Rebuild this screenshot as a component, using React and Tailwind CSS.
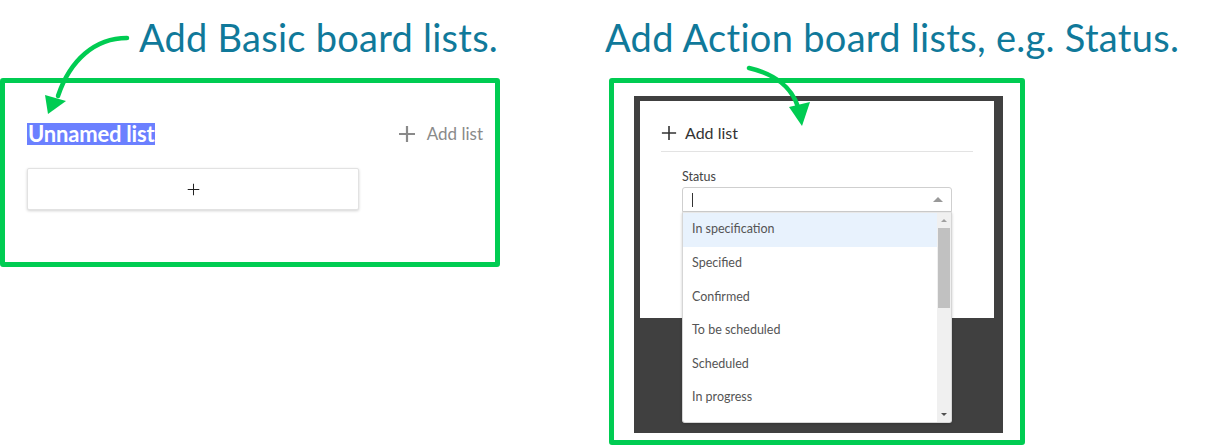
const STATUSES = ['In specification', 'Specified', 'Confirmed', 'To be scheduled', 'Scheduled', 'In progress']

// ── Annotation arrows ────────────────────────────────────────────────────────
function LeftArrow() {
  return (
    <svg className="absolute left-0 top-0" width="140" height="120" viewBox="0 0 140 120">
      <path d="M127 38 C 95 38, 70 60, 58 96" fill="none" stroke="#00cc52" strokeWidth="4.5" strokeLinecap="round" />
      <polygon points="45,95 66,101 48,114" fill="#00cc52" />
    </svg>
  )
}

function RightArrow() {
  return (
    <svg className="absolute left-[740px] top-[60px]" width="80" height="75" viewBox="740 60 80 75">
      <path d="M749 68 C 775 74, 792 88, 798 107" fill="none" stroke="#00cc52" strokeWidth="4.5" strokeLinecap="round" />
      <polygon points="789,107 810,102 802,126" fill="#00cc52" />
    </svg>
  )
}

function Plus({ size = 18, stroke = '#888', width = 2 }) {
  return (
    <svg width={size} height={size} viewBox="0 0 18 18">
      <path d="M9 1v16M1 9h16" stroke={stroke} strokeWidth={width} />
    </svg>
  )
}

// ── Basic board ──────────────────────────────────────────────────────────────
function BasicBoard() {
  return (
    <div className="w-[500px] h-[189px] border-[5px] border-[#00cc52] rounded-[3px] pt-[40px] pl-[22px] pr-[12px]">
      <div className="flex items-center justify-between h-[22px]">
        <span className="bg-[#6b80ff] text-white font-bold text-[22px] leading-[22px] tracking-[-0.2px] px-[1px]">Unnamed list</span>
        <div className="flex items-center gap-[11px] text-[#8a8a8a] text-[17px]">
          <Plus size={18} stroke="#8a8a8a" width={2.2} />
          <span>Add list</span>
        </div>
      </div>
      <div className="mt-[23px] w-[332px] h-[42px] bg-white border border-[#e2e2e2] rounded-[2px] shadow-[0_1px_3px_rgba(0,0,0,0.18)] flex items-center justify-center">
        <Plus size={13} stroke="#222" width={1.4} />
      </div>
    </div>
  )
}

// ── Action board ─────────────────────────────────────────────────────────────
function ActionBoard() {
  return (
    <div className="w-[416px] h-[367px] border-[5px] border-[#00cc52] rounded-[3px] pt-[13px] pl-[20px]">
      <div className="w-[369px] h-[337px] bg-[#404040] pt-[5px] pl-[6px]">
        <div className="relative w-[354px] h-[217px] bg-white pt-[22px] px-[21px]">
          <div className="flex items-center gap-[8px] text-[#333] text-[16px] h-[20px]">
            <Plus size={16} stroke="#333" width={1.8} />
            <span>Add list</span>
          </div>
          <div className="mt-[8px] border-t border-[#e3e3e3]" />
          <div className="pl-[21px] pt-[18px]">
            <div className="text-[12.5px] text-[#444] leading-[14px]">Status</div>
            <div className="mt-[3px] w-[270px] h-[25px] border border-[#cfcfcf] rounded-t-[3px] flex items-center justify-between pl-[9px] pr-[8px]">
              <span className="w-px h-[14px] bg-[#333]" />
              <span className="w-0 h-0 border-l-[5px] border-r-[5px] border-b-[5px] border-l-transparent border-r-transparent border-b-[#999]" />
            </div>
          </div>
          <div className="absolute left-[42px] top-[111px] w-[270px] h-[211px] bg-white border border-[#d6d6d6] border-t-[#e8e8e8] rounded-b-[3px] shadow-[0_1px_3px_rgba(0,0,0,0.2)] flex overflow-hidden">
            <div className="flex-1 flex flex-col">
              {STATUSES.map((s, i) => (
                <div
                  key={s}
                  className={`h-[33.6px] flex items-center pl-[9px] text-[12.5px] text-[#555] ${i === 0 ? 'bg-[#e8f2fd]' : ''}`}
                >
                  {s}
                </div>
              ))}
            </div>
            <div className="w-[14px] bg-[#f0f0f0] flex flex-col items-center">
              <span className="mt-[6px] w-0 h-0 border-l-[3px] border-r-[3px] border-b-[3px] border-l-transparent border-r-transparent border-b-[#a0a0a0]" />
              <div className="mt-[6px] w-[12px] h-[80px] bg-[#c1c1c1]" />
              <div className="flex-1" />
              <span className="mb-[6px] w-0 h-0 border-l-[3px] border-r-[3px] border-t-[3px] border-l-transparent border-r-transparent border-t-[#505050]" />
            </div>
          </div>
        </div>
      </div>
    </div>
  )
}

export default function App() {
  return (
    <div className="relative w-[1206px] h-[447px] bg-white overflow-hidden font-['Lato','Open_Sans',sans-serif]">
      <div className="flex">
        <div className="w-[609px] flex flex-col">
          <h1 className="h-[78px] pl-[139px] pt-[15px] text-[38px] leading-[44px] text-[#10799a] tracking-[0.25px] whitespace-nowrap">
            Add Basic board lists.
          </h1>
          <BasicBoard />
        </div>
        <div className="flex flex-col">
          <h1 className="h-[78px] -ml-[4px] pt-[15px] text-[38px] leading-[44px] text-[#10799a] tracking-[0.3px] whitespace-nowrap">
            Add Action board lists, e.g. Status.
          </h1>
          <ActionBoard />
        </div>
      </div>
      <LeftArrow />
      <RightArrow />
    </div>
  )
}
